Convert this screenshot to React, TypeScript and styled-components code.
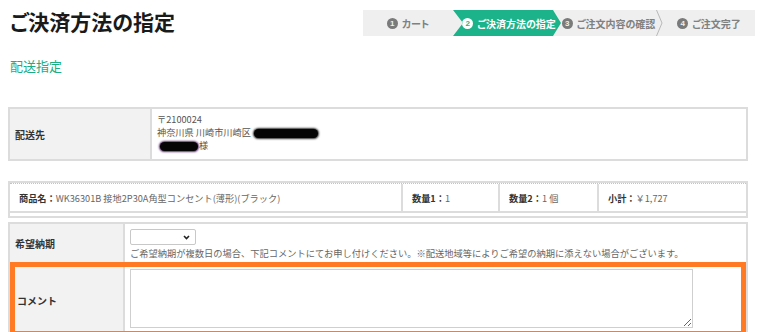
import React from 'react';
import styled, { createGlobalStyle } from 'styled-components'

const GlobalStyle = createGlobalStyle`
    body {
        margin: 0;
        background: #ffffff;
        font-family: "Noto Sans CJK JP", "Noto Sans", "Liberation Sans", sans-serif;
        color: #333;
    }
`

const Page = styled.div`
    width: 760px;
    height: 332px;
    overflow: hidden;
    padding: 0 0 0 8px;
    box-sizing: border-box;
`

const Header = styled.div`
    display: flex;
    justify-content: space-between;
    align-items: flex-start;
    padding: 6px 5px 0 2px;
`

const Title = styled.h1`
    margin: 0;
    font-size: 21px;
    line-height: 30px;
    font-weight: 700;
    color: #1a1a1a;
    font-feature-settings: "palt";
`

const StepBar = styled.div`
    display: flex;
    align-items: stretch;
    margin-top: 4px;
    height: 26px;
    width: 392px;
    background: #efefef;
`

const Step = styled.div<{ $w: number; $active?: boolean }>`
    width: ${p => p.$w}px;
    flex: none;
    display: flex;
    align-items: center;
    justify-content: center;
    gap: 3px;
    font-size: 10px;
    font-weight: 700;
    font-feature-settings: "palt";
    color: ${p => p.$active ? '#ffffff' : '#808080'};
    background: ${p => p.$active ? '#1db38a' : 'transparent'};
    clip-path: ${p => p.$active
        ? `polygon(0 0, ${p.$w - 8}px 0, ${p.$w}px 50%, ${p.$w - 8}px 100%, 0 100%, 10px 50%)`
        : 'none'};
    padding-left: ${p => p.$active ? 4 : 0}px;
    box-sizing: border-box;
`

const StepNum = styled.span<{ $active?: boolean }>`
    width: 11px;
    height: 11px;
    border-radius: 50%;
    background: ${p => p.$active ? '#ffffff' : '#7a7a7a'};
    color: ${p => p.$active ? '#1db38a' : '#efefef'};
    font-family: "Liberation Sans", sans-serif;
    font-size: 8px;
    line-height: 11px;
    text-align: center;
    font-weight: 700;
    margin-right: 1px;
`

const Divider = styled.svg`
    flex: none;
    width: 7px;
    height: 26px;
`

const SubTitle = styled.h2`
    margin: 20px 0 0 2px;
    font-size: 13px;
    line-height: 20px;
    font-weight: 400;
    color: #1aae84;
`

const Box = styled.div<{ $top: number }>`
    margin-top: ${p => p.$top}px;
    width: 740px;
    border: 2px solid #dcdcdc;
    box-sizing: border-box;
    background: #fff;
`

const Row = styled.div<{ $label: number; $highlight?: boolean }>`
    display: grid;
    grid-template-columns: ${p => p.$label}px 1fr;
    & + & {
        border-top: 2px solid #dcdcdc;
    }
    ${p => p.$highlight ? `
        outline: 5px solid #ff7a22;
        outline-offset: -5px;
        position: relative;
        z-index: 1;
    ` : ''}
`

const Label = styled.div<{ $indent?: number }>`
    background: #f2f2f2;
    border-right: 2px solid #dcdcdc;
    display: flex;
    align-items: center;
    padding-left: ${p => p.$indent ?? 5}px;
    font-size: 10px;
    font-weight: 700;
    color: #333;
`

const Cell = styled.div<{ $h: number; $pad?: number }>`
    height: ${p => p.$h}px;
    padding: ${p => p.$pad ?? 4}px 5px;
    box-sizing: border-box;
    font-size: 9.2px;
    line-height: 13px;
    color: #555;
`

const Redact = styled.span<{ $w: number; $purple?: boolean }>`
    display: inline-block;
    vertical-align: middle;
    width: ${p => p.$w}px;
    height: 9px;
    border-radius: 5px;
    background: #050505;
    box-shadow: 0 0 2px 1px ${p => p.$purple ? '#5a2a6a' : '#333'};
    margin: 0 1px 0 3px;
`

const ItemRow = styled.div`
    display: flex;
    height: 27px;
    border-top: 1px dotted #c4c4c4;
`

const ItemCell = styled.div<{ $w?: number }>`
    ${p => p.$w ? `width: ${p.$w}px; flex: none;` : 'flex: 1;'}
    display: flex;
    align-items: center;
    padding-left: 9px;
    box-sizing: border-box;
    font-size: 9.2px;
    color: #666;
    & + & {
        border-left: 2px solid #dcdcdc;
    }
    b {
        color: #333;
        font-weight: 700;
    }
`

const Spacer = styled.div`
    height: 3px;
    border-top: 2px solid #dcdcdc;
`

const Select = styled.div`
    width: 66px;
    height: 16px;
    margin-top: 1px;
    border: 1px solid #c8c8c8;
    border-radius: 2px;
    box-sizing: border-box;
    display: flex;
    align-items: center;
    justify-content: flex-end;
    padding-right: 5px;
`

const Note = styled.div`
    margin-top: 2px;
    font-size: 9.25px;
    line-height: 12px;
    color: #666;
    white-space: nowrap;
`

const TextArea = styled.textarea`
    display: block;
    width: 563px;
    height: 59px;
    margin: 0;
    border: 1px solid #cfcfcf;
    box-sizing: border-box;
    resize: both;
    font-family: inherit;
`

const steps = [
    { n: 1, label: 'カート', w: 90 },
    { n: 2, label: 'ご決済方法の指定', w: 108, active: true },
    { n: 3, label: 'ご注文内容の確認', w: 95 },
    { n: 4, label: 'ご注文完了', w: 92 },
]

const App = () => {
    return (
        <>
        <GlobalStyle />
        <Page>
            <Header>
                <Title>ご決済方法の指定</Title>
                <StepBar>
                    {steps.map(s => (
                        <React.Fragment key={s.n}>
                            <Step $w={s.w} $active={s.active}>
                                <StepNum $active={s.active}>{s.n}</StepNum>
                                {s.label}
                            </Step>
                            {s.n === 3 && (
                                <Divider viewBox="0 0 7 26">
                                    <polyline points="0.5,0 6,13 0.5,26" fill="none" stroke="#b8b8b8" strokeWidth="1" />
                                </Divider>
                            )}
                        </React.Fragment>
                    ))}
                </StepBar>
            </Header>

            <SubTitle>配送指定</SubTitle>

            <Box $top={31}>
                <Row $label={142}>
                    <Label>配送先</Label>
                    <Cell $h={50}>
                        〒2100024<br />
                        神奈川県 川崎市川崎区<Redact $w={64} /><br />
                        <Redact $w={38} $purple />様
                    </Cell>
                </Row>
            </Box>

            <Box $top={20}>
                <ItemRow>
                    <ItemCell $w={391}><b>商品名：</b>WK36301B 接地2P30A角型コンセント(薄形)(ブラック)</ItemCell>
                    <ItemCell $w={97}><b>数量1：</b>1</ItemCell>
                    <ItemCell $w={99}><b>数量2：</b>1 個</ItemCell>
                    <ItemCell><b>小計：</b>￥1,727</ItemCell>
                </ItemRow>
                <Spacer />
            </Box>

            <Box $top={4}>
                <Row $label={115}>
                    <Label>希望納期</Label>
                    <Cell $h={38}>
                        <Select>
                            <svg width="7" height="5" viewBox="0 0 7 5">
                                <polyline points="1,1 3.5,3.5 6,1" fill="none" stroke="#222" strokeWidth="1.6" />
                            </svg>
                        </Select>
                        <Note>ご希望納期が複数日の場合、下記コメントにてお申し付けください。※配送地域等によりご希望の納期に添えない場合がございます。</Note>
                    </Cell>
                </Row>
                <Row $label={115} $highlight>
                    <Label $indent={7}>コメント</Label>
                    <Cell $h={72} $pad={5}>
                        <TextArea />
                    </Cell>
                </Row>
            </Box>
        </Page>
        </>
    )
}

export default App
